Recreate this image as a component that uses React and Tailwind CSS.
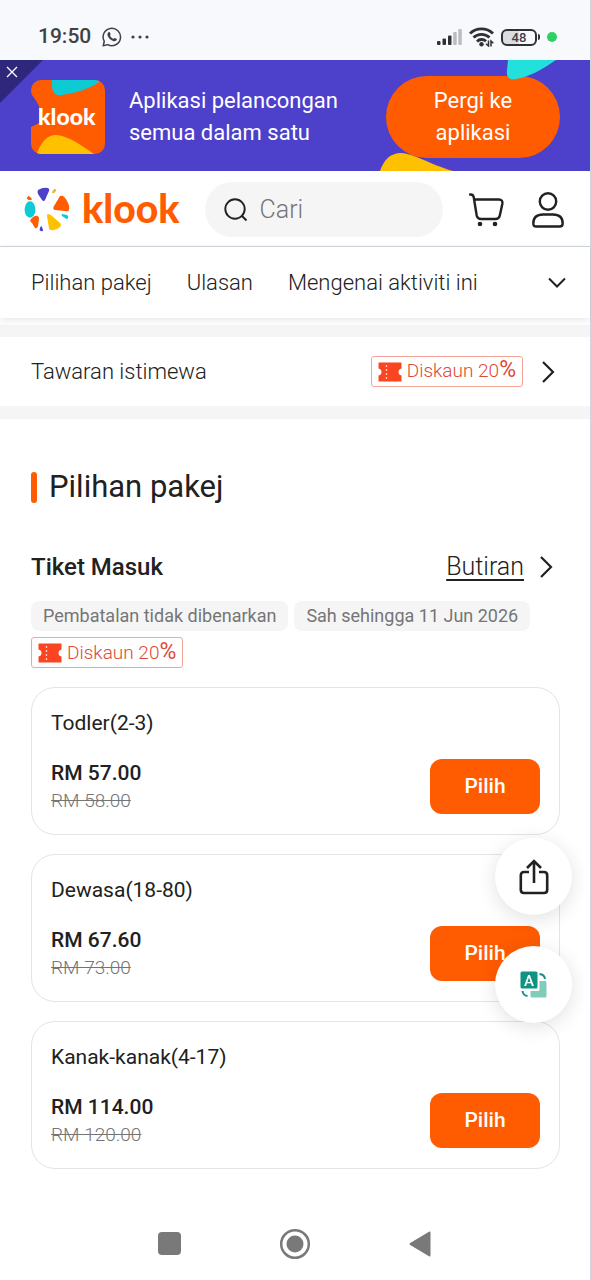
import React, { useState } from "react";

const packages = [
  { id: 1, name: "Todler(2-3)", price: "RM 57.00", oldPrice: "RM 58.00" },
  { id: 2, name: "Dewasa(18-80)", price: "RM 67.60", oldPrice: "RM 73.00" },
  { id: 3, name: "Kanak-kanak(4-17)", price: "RM 114.00", oldPrice: "RM 120.00" },
];

const tabs = ["Pilihan pakej", "Ulasan", "Mengenai aktiviti ini"];

const StatusBar = () => (
  <div className="flex h-[60px] items-center justify-between bg-[#f8f9fd] pt-[14px] pr-[33px] pl-[38px] text-[#3f4145]">
    <div className="flex items-center gap-[11px]">
      <span className="text-[21px] font-medium">19:50</span>
      <svg className="size-5" viewBox="0 0 20 20" fill="none" aria-hidden="true">
        <path
          d="M1.2 18.8l1.1-4.5A8.7 8.7 0 1 1 5.7 17.6z"
          stroke="currentColor"
          strokeWidth="1.5"
          strokeLinejoin="round"
        />
        <path
          d="M6.600 5.200c.5-.4 1.100-.3 1.300.2l.7 1.600c.2.5-.6 1.200-.6 1.500.6 1.400 1.800 2.600 3.300 3.200.4.1 1-1 1.500-.8l1.700.8c.5.3.4.9.1 1.300-.8 1.200-2.200 1.400-3.500.9-2.700-1-4.900-3.100-5.600-5.700-.3-1.200.2-2.400 1.100-3z"
          fill="currentColor"
        />
      </svg>
      <svg className="-ml-0.5 h-1 w-[18px]" viewBox="0 0 18 4" fill="currentColor" aria-hidden="true">
        <circle cx="2" cy="2" r="1.6" />
        <circle cx="9" cy="2" r="1.6" />
        <circle cx="16" cy="2" r="1.6" />
      </svg>
    </div>
    <div className="flex items-center gap-[7px]">
      <svg className="h-4 w-[25px]" viewBox="0 0 25 16" aria-hidden="true">
        <rect x="0" y="12" width="3.5" height="4" rx="1" fill="#303135" />
        <rect x="5.5" y="9.5" width="3.5" height="6.5" rx="1" fill="#303135" />
        <rect x="11" y="6.5" width="3.5" height="9.5" rx="1" fill="#303135" />
        <rect x="16.2" y="3" width="3.5" height="13" rx="1" fill="#bbbcc0" />
        <rect x="21.3" y="0" width="3.5" height="16" rx="1" fill="#bbbcc0" />
      </svg>
      <svg className="h-5 w-[25px]" viewBox="0 0 25 20" fill="none" aria-hidden="true">
        <path
          d="M1 6.5a16.5 16.5 0 0 1 23 0M4.5 10.6a11.5 11.5 0 0 1 16 0M8 14.4a6.5 6.5 0 0 1 9-.2"
          stroke="#303135"
          strokeWidth="2.8"
        />
        <circle cx="12.5" cy="17.2" r="2.2" fill="#303135" />
        <path d="M19.500 13.500v5.500l-2.500-2.300M22 19.500V14l2.300 2.300" stroke="#303135" strokeWidth="1.5" />
      </svg>
      <div className="flex items-center">
        <div className="flex h-[17px] w-9 items-center justify-center rounded-md border-2 border-[#303135] bg-linear-to-r from-[#dcdde2] from-50% to-[#f8f9fd] to-50% text-[13px] leading-none font-medium">
          48
        </div>
        <div className="ml-px h-1.5 w-0.5 rounded-r-sm bg-[#303135]"></div>
      </div>
      <div className="size-2.5 rounded-full bg-[#2fd065]"></div>
    </div>
  </div>
);

const AppBanner = ({ onClose }) => (
  <div className="relative flex items-center justify-between bg-[#4d40ca] pt-4 pr-[30px] pb-[13px] pl-[31px] text-[22px] leading-8 text-white">
    <button aria-label="Tutup" onClick={onClose} className="absolute top-0 left-0 size-[43px]">
      <svg viewBox="0 0 43 43" fill="none">
        <path d="M0 0h43L0 43z" fill="#2e277c" />
        <path d="M7 7l10 10M17 7L7 17" stroke="#fff" strokeWidth="1.3" />
      </svg>
    </button>
    <div className="flex items-center gap-6">
      <svg className="size-[74px] shrink-0" viewBox="0 0 74 74" role="img" aria-label="klook">
        <path
          d="M10 0h54a10 10 0 0 1 10 10v54a10 10 0 0 1-10 10H10A10 10 0 0 1 0 64V47l8-4V26Q5 20 1 15 0 13 0 10A10 10 0 0 1 10 0z"
          fill="#ff5b00"
        />
        <path d="M21 0h43q3 0 5 1.500C60 8 46 13 31 15c-7 1-10-3-10-10z" fill="#0dcad5" />
        <path d="M6 73C11 60 18 54 26 55c14 2 25 11 37 19H10q-2 0-4-1z" fill="#ffc000" />
        <text x="7" y="45" fill="#fff" className="font-['Lato'] text-[23px] font-black">
          klook
        </text>
      </svg>
      <p>
        Aplikasi pelancongan
        <br />
        semua dalam satu
      </p>
    </div>
    <a
      href="#app"
      className="flex h-[82px] w-[174px] items-center justify-center rounded-full bg-[#ff5b00] px-8 text-center"
    >
      Pergi ke aplikasi
    </a>
    <svg
      className="pointer-events-none absolute top-0 right-0 h-full w-[220px]"
      viewBox="0 0 220 111"
      aria-hidden="true"
    >
      <path d="M138 0h48c-13 9-27 17-40 19-7 1-10-2-9-9z" fill="#22e0dc" />
      <path d="M10 111c4-12 11-18 21-18 14 1 28 11 52 18z" fill="#ffc000" />
    </svg>
  </div>
);

const KlookLogo = () => (
  <a href="#home" className="flex h-[46px] items-center gap-3" aria-label="klook">
    <svg className="size-[46px] shrink-0" viewBox="0 0 46 46" aria-hidden="true">
      <path d="M14 3q5-3 10-2 2 1 1 3l-4 9q-1 2-3 0l-4-6q-1-2 0-4z" fill="#4d40ca" />
      <path d="M30 2q3 0 2 2l-2 2q-2 1-2-1z" fill="#f3b51c" />
      <path d="M36 9q4-1 7 5 3 5 2 9-1 2-4 1l-10-1q-3-1-1-4z" fill="#ff5b00" />
      <path d="M38 27l5 1q2 1 1 3-1 2-3 0l-3-2q-1-2 0-2z" fill="#0dcad5" />
      <path d="M24 27q2 0 4 2l8 7q2 2 0 4-4 4-9 3-2 0-2-2l-2-12q0-2 1-2z" fill="#ffc000" />
      <path d="M17 39q1 0 2 4 0 2-2 1-2 0-1-3z" fill="#4d40ca" />
      <path d="M8 36q-3-2-1-4 4-4 6-3 2 0 2 3l-1 7q-1 3-3 2z" fill="#ff5b00" />
      <ellipse cx="6" cy="22.5" rx="5.4" ry="8.2" fill="#0dcad5" />
      <path d="M4 9q2 0 4 3 0 1-2 1-3 0-3-2z" fill="#ff5b00" />
    </svg>
    <span className="pb-0.5 font-['Lato'] text-[39px] leading-none font-black text-[#ff5b00]">
      klook
    </span>
  </a>
);

const Header = () => (
  <header className="flex items-center border-b border-gray-300 bg-white pt-[11px] pr-[26px] pb-[9px] pl-6">
    <KlookLogo />
    <label className="ml-[25px] flex h-[55px] min-w-0 flex-1 items-center gap-3 rounded-full bg-[#f5f5f5] pl-[19px]">
      <svg className="size-6 shrink-0" viewBox="0 0 24 24" fill="none" aria-hidden="true">
        <circle cx="11" cy="11" r="9.7" stroke="#212121" strokeWidth="1.9" />
        <path d="M18 18l4.500 4.500" stroke="#212121" strokeWidth="1.9" />
      </svg>
      <input
        type="text"
        aria-label="Cari"
        placeholder="Cari"
        className="w-full min-w-0 bg-transparent text-[25px] font-light outline-none placeholder:text-[#757575]"
      />
    </label>
    <button aria-label="Troli" className="ml-[26px]">
      <svg className="h-[34px] w-[35px]" viewBox="0 0 35 34" fill="none" aria-hidden="true">
        <path
          d="M1 1.500q3-.4 3.700 2.500l3 18.500q.8 3.500 4.300 3.500h14.500q3.500 0 4.300-3.500l2.500-11.500q.7-4.500-3.300-4.500H5.200"
          stroke="#212121"
          strokeWidth="2.4"
          strokeLinecap="round"
        />
        <circle cx="11" cy="31" r="2.3" fill="#212121" />
        <circle cx="26" cy="31" r="2.3" fill="#212121" />
      </svg>
    </button>
    <button aria-label="Akaun" className="ml-7">
      <svg className="h-[36px] w-[32px]" viewBox="0 0 32 36" fill="none" aria-hidden="true">
        <circle cx="16" cy="9.5" r="8.2" stroke="#212121" strokeWidth="2.4" />
        <path
          d="M11 22.500h10q9.700 0 9.700 9 0 3-3 3H4.300q-3 0-3-3 0-9 9.700-9z"
          stroke="#212121"
          strokeWidth="2.4"
        />
      </svg>
    </button>
  </header>
);

const Chevron = () => (
  <svg className="h-6 w-4" viewBox="0 0 16 24" fill="none" aria-hidden="true">
    <path d="M2 2l10 10L2 22" stroke="#212121" strokeWidth="2.2" />
  </svg>
);

const DiscountTag = () => (
  <div className="flex h-[31px] items-center gap-[5px] rounded-[3px] border border-[#f5a699] px-1.5 text-[19px] font-light text-[#e04a35]">
    <svg className="h-5 w-6" viewBox="0 0 24 20" aria-hidden="true">
      <path
        d="M1 .5h22q.5 0 .5.500v5.500q-3 .5-3 3.500t3 3.500V19q0 .5-.5.500H1q-.5 0-.5-.5v-5.500q3-.5 3-3.500t-3-3.500V1Q.5.500 1 .5z"
        fill="#fa4520"
      />
      <path d="M8.500 3v14" stroke="#ffd5cb" strokeWidth="1.3" strokeDasharray="2 2" />
    </svg>
    <span>
      Diskaun 20<span className="text-[23px] leading-none font-normal">%</span>
    </span>
  </div>
);

const PackageCard = ({ item }) => (
  <div className="rounded-3xl border border-[#e4e4e4] bg-white px-[19px] pt-5 pb-[19px]">
    <h4 className="text-[21px] leading-[30px]">{item.name}</h4>
    <div className="mt-[21px] flex items-start justify-between">
      <div>
        <p className="text-[21px] leading-[28px] font-medium">{item.price}</p>
        <p className="text-[19px] leading-[28px] font-light text-[#757575] line-through">
          {item.oldPrice}
        </p>
      </div>
      <button className="h-[55px] w-[110px] rounded-xl bg-[#ff5b00] text-[21px] font-medium text-white">
        Pilih
      </button>
    </div>
  </div>
);

const FloatingButtons = () => (
  <div className="fixed right-[19px] bottom-[257px] flex flex-col gap-[31px]">
    <button
      aria-label="Kongsi"
      className="flex size-[77px] items-center justify-center rounded-full bg-white shadow-[0_4px_20px_rgba(0,0,0,0.12)]"
    >
      <svg className="h-9 w-[30px]" viewBox="0 0 30 36" fill="none" aria-hidden="true">
        <path
          d="M10 13H5q-3.200 0-3.200 3.200v14.600Q1.800 34 5 34h20q3.200 0 3.200-3.200V16.200Q28.200 13 25 13h-5M15 24V2.500M8 9l7-7 7 7"
          stroke="#212121"
          strokeWidth="2.6"
        />
      </svg>
    </button>
    <button
      aria-label="Terjemah"
      className="flex size-[77px] items-center justify-center rounded-full bg-white shadow-[0_4px_20px_rgba(0,0,0,0.12)]"
    >
      <svg className="size-[27px]" viewBox="0 0 27 27" fill="none" aria-hidden="true">
        <path d="M19.500 10H25q1.500 0 1.500 1.500V25q0 1.500-1.500 1.500H12q-1.500 0-1.500-1.500v-5H18q1.500 0 1.500-1.500z" fill="#80cbbb" />
        <rect x="0.5" y="0.5" width="17" height="17" rx="1.5" fill="#0f9382" />
        <text x="9" y="14.5" textAnchor="middle" fill="#fff" className="text-[15px] font-medium">
          A
        </text>
        <path d="M19.500 3q5 .5 5.500 5M7.500 25Q3 24.500 2.500 20" stroke="#0f9382" strokeWidth="2" />
      </svg>
    </button>
  </div>
);

const NavBar = () => (
  <nav className="mt-auto flex h-[73px] items-center pl-[158px] text-[#797979]">
    <button aria-label="Aplikasi terkini">
      <svg className="size-[23px]" viewBox="0 0 23 23" fill="currentColor">
        <rect width="23" height="23" rx="4" />
      </svg>
    </button>
    <button aria-label="Laman utama" className="ml-[98px]">
      <svg className="size-8" viewBox="0 0 32 32" fill="none">
        <circle cx="16" cy="16" r="13.8" stroke="currentColor" strokeWidth="2.5" />
        <circle cx="16" cy="16" r="8.5" fill="currentColor" />
      </svg>
    </button>
    <button aria-label="Kembali" className="ml-[98px]">
      <svg className="h-[26px] w-[22px]" viewBox="0 0 22 26" fill="currentColor">
        <path d="M1.200 12L20 .7q1.500-.7 1.500 1v22.600q0 1.700-1.500 1L1.200 14q-1.400-1 0-2z" />
      </svg>
    </button>
  </nav>
);

const App = () => {
  const [showBanner, setShowBanner] = useState(true);

  return (
    <div className="flex min-h-screen flex-col border-r border-gray-300 bg-white font-['Roboto',sans-serif] text-[#212121]">
      <StatusBar />
      {showBanner && <AppBanner onClose={() => setShowBanner(false)} />}
      <Header />
      <div className="relative flex h-[71px] items-center justify-between bg-white pr-6 pl-[31px] shadow-[0_2px_8px_rgba(0,0,0,0.1)]">
        <div className="flex gap-[35px] text-[22px] font-light whitespace-nowrap">
          {tabs.map((tab) => (
            <a key={tab} href="#pakej">
              {tab}
            </a>
          ))}
        </div>
        <button aria-label="Lagi">
          <svg className="h-3 w-[18px]" viewBox="0 0 18 12" fill="none">
            <path d="M1 1.500l8 8 8-8" stroke="#212121" strokeWidth="2" />
          </svg>
        </button>
      </div>
      <div className="mt-[7px] flex h-[94px] items-center justify-between border-t-[12px] border-b-[13px] border-[#f5f5f5] pr-[33px] pl-[31px]">
        <span className="text-[22px] font-light">Tawaran istimewa</span>
        <a href="#tawaran" className="flex items-center gap-[18px]">
          <DiscountTag />
          <Chevron />
        </a>
      </div>
      <main id="pakej" className="pt-12 pr-[30px] pl-[31px]">
        <h2 className="flex items-center gap-3 text-[31px] leading-10">
          <span className="h-[31px] w-1.5 rounded-full bg-[#ff5b00]"></span>
          Pilihan pakej
        </h2>
        <div className="mt-[44px] flex items-center justify-between pr-[5px] leading-8">
          <h3 className="text-[24px] font-medium">Tiket Masuk</h3>
          <a href="#butiran" className="flex items-center gap-[15px] text-[25px] font-light">
            <span className="underline decoration-2 underline-offset-4">Butiran</span>
            <Chevron />
          </a>
        </div>
        <div className="mt-[18px] flex flex-wrap gap-1.5 text-[18px] leading-[30px] text-[#757575]">
          <span className="rounded-lg bg-[#f5f5f5] px-3">Pembatalan tidak dibenarkan</span>
          <span className="rounded-lg bg-[#f5f5f5] px-3">Sah sehingga 11 Jun 2026</span>
          <DiscountTag />
        </div>
        <div className="mt-[19px] flex flex-col gap-[19px]">
          {packages.map((item) => (
            <PackageCard key={item.id} item={item} />
          ))}
        </div>
      </main>
      <FloatingButtons />
      <NavBar />
    </div>
  );
};

export default App;
